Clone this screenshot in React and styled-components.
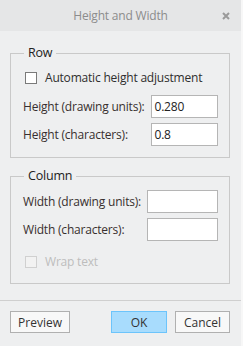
import React from 'react';
import styled, { createGlobalStyle } from 'styled-components';

const GlobalStyle = createGlobalStyle`
	html, body {
		margin: 0;
		padding: 0;
		background: #f7f7f7;
	}
	* {
		box-sizing: border-box;
	}
`;

const Dialog = styled.div`
	width: 241px;
	height: 346px;
	display: flex;
	flex-direction: column;
	background-color: #eeeff0;
	font-family: 'Open Sans', 'Noto Sans', sans-serif;
	font-size: 12px;
	letter-spacing: -0.2px;
	color: #333;
`;

const TitleBar = styled.div`
	position: relative;
	height: 31px;
	display: flex;
	align-items: center;
	justify-content: center;
	background-color: #e5e6e7;
	color: #8c8c8c;
	font-size: 12px;
`;

const CloseButton = styled.svg`
	position: absolute;
	right: 11px;
	top: 12px;
	width: 8px;
	height: 8px;
`;

const Body = styled.div`
	padding: 14px 11px 0 10px;
`;

const Group = styled.fieldset`
	margin: ${(p) => (p.$first ? '0' : '10px 0 0')};
	padding: ${(p) => p.$pad};
	border: 1px solid #c9c9c9;
	min-width: 0;
`;

const Legend = styled.legend`
	padding: 0 4px;
	margin-left: 1px;
	line-height: 16px;
	color: #222;
	font-size: 12.5px;
`;

const CheckRow = styled.label`
	height: 17px;
	display: flex;
	align-items: center;
	gap: 8px;
	margin-left: 2px;
	margin-top: ${(p) => p.$top || '0'};
	color: ${(p) => (p.$disabled ? '#bdbdbd' : '#2e2e2e')};
`;

const Box = styled.span`
	width: 12px;
	height: 12px;
	border: 1px solid ${(p) => (p.$disabled ? '#d0d0d0' : '#7a7a7a')};
	background: ${(p) => (p.$disabled ? '#f2f2f2' : '#fff')};
`;

const Fields = styled.div`
	display: grid;
	grid-template-columns: auto 1fr;
	column-gap: 6px;
	row-gap: 5px;
	align-items: center;
	margin-top: ${(p) => p.$top || '0'};
`;

const Label = styled.span`
	white-space: nowrap;
	color: #382f2f;
`;

const Input = styled.div`
	height: 23px;
	border: 1px solid #b5b5b5;
	background: #fff;
	padding: 0 3px;
	display: flex;
	align-items: center;
	color: #222;
`;

const Footer = styled.div`
	margin-top: 16px;
	border-top: 1px solid #cfcfcf;
	padding: 10px 11px 0 10px;
	display: flex;
	gap: 8px;
`;

const Button = styled.button`
	height: 22px;
	width: ${(p) => p.$w}px;
	margin-left: ${(p) => (p.$push ? 'auto' : '0')};
	padding: 0;
	font-family: inherit;
	font-size: 12px;
	color: #333;
	border: 1px solid ${(p) => (p.$primary ? '#6cc4fb' : '#b0b0b0')};
	background: ${(p) => (p.$primary ? '#a8dcfd' : '#f8f8f8')};
`;

const App = () => {
	return (
		<>
			<GlobalStyle />
			<Dialog>
				<TitleBar>
					Height and Width
					<CloseButton viewBox='0 0 8 8'>
						<path d='M1 1L7 7M7 1L1 7' stroke='#9a9a9a' strokeWidth='2' />
					</CloseButton>
				</TitleBar>
				<Body>
					<Group $first $pad='8px 11px 11px 12px'>
						<Legend>Row</Legend>
						<CheckRow>
							<Box />
							Automatic height adjustment
						</CheckRow>
						<Fields $top='9px'>
							<Label>Height (drawing units):</Label>
							<Input>0.280</Input>
							<Label>Height (characters):</Label>
							<Input>0.8</Input>
						</Fields>
					</Group>
					<Group $pad='6px 11px 13px 12px'>
						<Legend>Column</Legend>
						<Fields>
							<Label>Width (drawing units):</Label>
							<Input />
							<Label>Width (characters):</Label>
							<Input />
						</Fields>
						<CheckRow $disabled $top='12px'>
							<Box $disabled />
							Wrap text
						</CheckRow>
					</Group>
				</Body>
				<Footer>
					<Button $w={60}>Preview</Button>
					<Button $w={56} $primary $push>
						OK
					</Button>
					<Button $w={55}>Cancel</Button>
				</Footer>
			</Dialog>
		</>
	);
};

export default App;
